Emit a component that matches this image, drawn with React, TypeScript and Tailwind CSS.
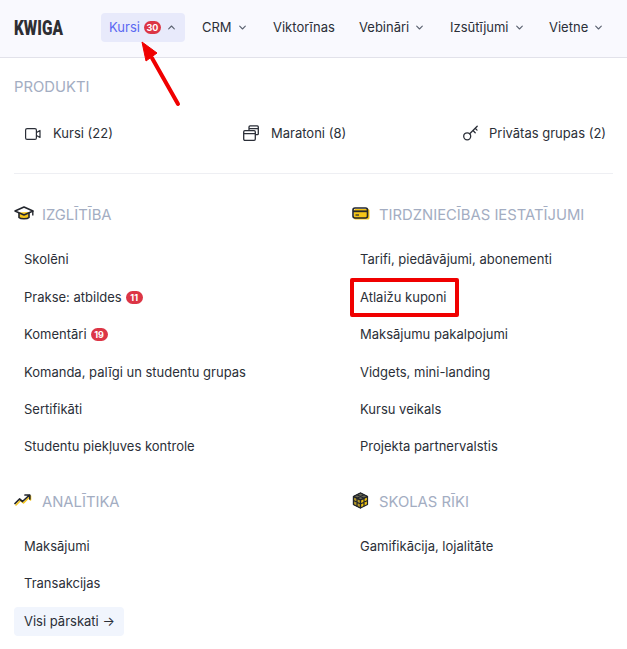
import type { ReactNode } from "react";

function Chevron({ up = false }: { up?: boolean }) {
  return (
    <svg width="7" height="5" viewBox="0 0 7 5" fill="none" stroke="#5b6270" strokeWidth="1.1" strokeLinecap="round" strokeLinejoin="round">
      <path d={up ? "M.7 3.800 3.500 1l2.800 2.800" : "M.7 1.200 3.500 4l2.800-2.800"} />
    </svg>
  );
}

function Badge({ children }: { children: string }) {
  return (
    <span className="inline-flex h-[13px] w-[17px] items-center justify-center rounded-full bg-[#dc3545] text-[9px] font-bold leading-none text-white">
      {children}
    </span>
  );
}

function NavItem({ label, chevron = true, className }: { label: string; chevron?: boolean; className: string }) {
  return (
    <div className={`flex items-center gap-[7px] ${className}`}>
      <span>{label}</span>
      {chevron && <Chevron />}
    </div>
  );
}

function Row({ label, badge, pad = "pl-[10px]" }: { label: string; badge?: string; pad?: string }) {
  return (
    <div className={`flex h-[37.4px] items-center gap-[4px] ${pad}`}>
      <span>{label}</span>
      {badge && <Badge>{badge}</Badge>}
    </div>
  );
}

function SectionTitle({ icon, label, gap }: { icon: ReactNode; label: string; gap: string }) {
  return (
    <div className={`flex h-[24px] items-center ${gap} text-[14.8px] text-[#a3adc2]`}>
      {icon}
      <span>{label}</span>
    </div>
  );
}

const CapIcon = (
  <svg className="mb-[3px]" width="20" height="15" viewBox="0 0 20 15" fill="none" strokeLinejoin="round">
    <path d="M5 7.500v4c1.600 1.700 8.400 1.700 10 0v-4L10 9.500z" fill="#f5c518" />
    <path d="M4.500 6.500 15.500 6v1.500L10 9.500z" fill="#f5c518" />
    <path d="M10 1 19 5 10 9 1 5z" stroke="#23262d" strokeWidth="1.600" />
    <path d="M5 7v4.500c1.600 1.700 8.400 1.700 10 0V7" stroke="#23262d" strokeWidth="1.600" />
    <path d="M18.800 5v4.500" stroke="#23262d" strokeWidth="1.400" />
  </svg>
);

const CardIcon = (
  <svg className="mb-[3px]" width="18" height="13" viewBox="0 0 18 13" fill="none">
    <rect x="2" y="2" width="15.500" height="10.500" rx="1.500" fill="#f5c518" />
    <rect x="1" y="1" width="14.500" height="10" rx="2" stroke="#23262d" strokeWidth="1.600" />
    <path d="M1 4.300h14.500" stroke="#23262d" strokeWidth="1.800" />
    <path d="M3.500 8h3.500" stroke="#23262d" strokeWidth="1.200" />
  </svg>
);

const TrendIcon = (
  <svg className="mb-[4px]" width="18" height="12" viewBox="0 0 18 12" fill="none" strokeLinecap="round" strokeLinejoin="round">
    <path d="M2 11 6.500 6.500l3 2.500 7-7v4" stroke="#f5c518" strokeWidth="1.600" />
    <path d="M1 9.500 5.500 5l3 2.500L15.500 1M11 1h4.800v4" stroke="#23262d" strokeWidth="1.700" />
  </svg>
);

const CubeIcon = (
  <svg className="mb-[4px]" width="17" height="17" viewBox="0 0 17 17" fill="none" stroke="#23262d" strokeWidth="1.200" strokeLinejoin="round">
    <path d="M8.500 1 15.500 4.500v8L8.500 16 1.500 12.500v-8z" fill="#f0c40f" />
    <path d="M1.500 4.500 8.500 1l7 3.500L8.500 8z" fill="#6b6a55" />
    <path d="M1.500 4.500 8.500 8v8L1.500 12.500z" fill="#b59a28" />
    <path d="M1.500 4.500 8.500 8l7-3.500M8.500 8v8M5 2.800l7 3.500M12 2.800 5 6.300M5 6.300v8M12 6.300v8M1.500 8.500l7 3.500 7-3.500" />
  </svg>
);

export default function App() {
  return (
    <div className="relative h-[649px] w-[627px] overflow-hidden bg-white font-['Inter','Liberation_Sans',sans-serif] text-[13px] text-[#2b2f38]">
      <header className="flex h-[58px] items-center border-b border-[#e2e2ea] bg-[#f9f9fe] pb-[2px]">
        <span className="ml-[14px] w-[87px] origin-left scale-x-[0.77] font-['Roboto',sans-serif] text-[20px] font-black leading-none text-[#2e2e33]">KWIGA</span>
        <div className="flex h-[29px] w-[84px] items-center rounded-[4px] bg-[#e8eafb] pl-[8px] text-[#5a67f2]">
          <span>Kursi</span>
          <span className="ml-[4px] flex"><Badge>30</Badge></span>
          <span className="ml-[7px] flex"><Chevron up /></span>
        </div>
        <NavItem label="CRM" className="ml-[17px] w-[71px]" />
        <NavItem label="Viktorīnas" chevron={false} className="w-[86px]" />
        <NavItem label="Vebināri" className="w-[91px]" />
        <NavItem label="Izsūtījumi" className="w-[99px]" />
        <NavItem label="Vietne" className="w-[60px]" />
      </header>

      <main className="px-[14px]">
        <div className="pt-[20px] text-[14.8px] leading-[18px] text-[#a3adc2]">PRODUKTI</div>

        <div className="mt-[27px] flex h-[22px] items-center pl-[11px]">
          <div className="flex w-[218px] items-center gap-[12px]">
            <svg width="16" height="12" viewBox="0 0 16 12" fill="none" stroke="#2b2f38" strokeWidth="1.200" strokeLinejoin="round">
              <rect x="0.600" y="0.600" width="10.800" height="10.800" rx="1.500" />
              <path d="M11.500 4.500 15 2.500v7l-3.500-2" />
            </svg>
            <span>Kursi (22)</span>
          </div>
          <div className="flex w-[220px] items-center gap-[12px]">
            <svg className="mb-[2px]" width="16" height="16" viewBox="0 0 16 16" fill="none" stroke="#2b2f38" strokeWidth="1.300" strokeLinejoin="round">
              <rect x="0.700" y="5.700" width="11.600" height="9.600" rx="1.200" />
              <path d="M.7 8.700h11.600M6 5.500V2c0-.7.400-1.100 1.100-1.100h7.200c.6 0 1 .4 1 1v6.800c0 .6-.4 1-1 1h-2M6 3.600h9.300" />
            </svg>
            <span>Maratoni (8)</span>
          </div>
          <div className="flex items-center gap-[11px] whitespace-nowrap">
            <svg className="mb-[2px]" width="15" height="16" viewBox="0 0 15 16" fill="none" stroke="#2b2f38" strokeWidth="1.300" strokeLinecap="round">
              <circle cx="4.200" cy="11.300" r="3.500" />
              <path d="m6.700 8.800 7.500-7.500M10 5.500l2.200 2.200M12.200 3.300l1.800 1.800" />
            </svg>
            <span>Privātas grupas (2)</span>
          </div>
        </div>

        <div className="mt-[28px] border-t border-[#eeeff3]" />

        <div className="grid grid-cols-[338px_1fr] pt-[29px]">
          <div>
            <SectionTitle icon={CapIcon} label="IZGLĪTĪBA" gap="gap-[8px]" />
            <div className="mt-[14.4px]">
              <Row label="Skolēni" />
              <Row label="Prakse: atbildes" badge="11" />
              <Row label="Komentāri" badge="19" />
              <Row label="Komanda, palīgi un studentu grupas" />
              <Row label="Sertifikāti" />
              <Row label="Studentu piekļuves kontrole" />
            </div>
          </div>
          <div>
            <SectionTitle icon={CardIcon} label="TIRDZNIECĪBAS IESTATĪJUMI" gap="gap-[9px]" />
            <div className="mt-[14.4px]">
              <Row pad="pl-[8px]" label="Tarifi, piedāvājumi, abonementi" />
              <Row pad="pl-[8px]" label="Atlaižu kuponi" />
              <Row pad="pl-[8px]" label="Maksājumu pakalpojumi" />
              <Row pad="pl-[8px]" label="Vidgets, mini-landing" />
              <Row pad="pl-[8px]" label="Kursu veikals" />
              <Row pad="pl-[8px]" label="Projekta partnervalstis" />
            </div>
          </div>
          <div className="mt-[24.600px]">
            <SectionTitle icon={TrendIcon} label="ANALĪTIKA" gap="gap-[10px]" />
            <div className="mt-[14px]">
              <Row label="Maksājumi" />
              <div className="-mt-[0.6px]"><Row label="Transakcijas" /></div>
            </div>
            <div className="mt-[4.600px] flex h-[29px] w-[110px] items-center rounded-[4px] bg-[#f1f5fd] pl-[10px]">Visi pārskati →</div>
          </div>
          <div className="mt-[24.600px]">
            <SectionTitle icon={CubeIcon} label="SKOLAS RĪKI" gap="gap-[10px]" />
            <div className="mt-[14px]">
              <Row pad="pl-[8px]" label="Gamifikācija, lojalitāte" />
            </div>
          </div>
        </div>
      </main>

      {/* annotations over the page */}
      <div className="absolute left-[350px] top-[278px] h-[39px] w-[109px] rounded-[2px] border-[4px] border-[#f00000]" />
      <svg className="absolute left-[135px] top-[38px]" width="50" height="72" viewBox="0 0 50 72" fill="none">
        <path d="M43 66 17 20" stroke="#f00000" strokeWidth="4" strokeLinecap="round" />
        <path d="M7 4 22 15 11 23z" fill="#f00000" stroke="#f00000" strokeWidth="1" strokeLinejoin="round" />
      </svg>
    </div>
  );
}
